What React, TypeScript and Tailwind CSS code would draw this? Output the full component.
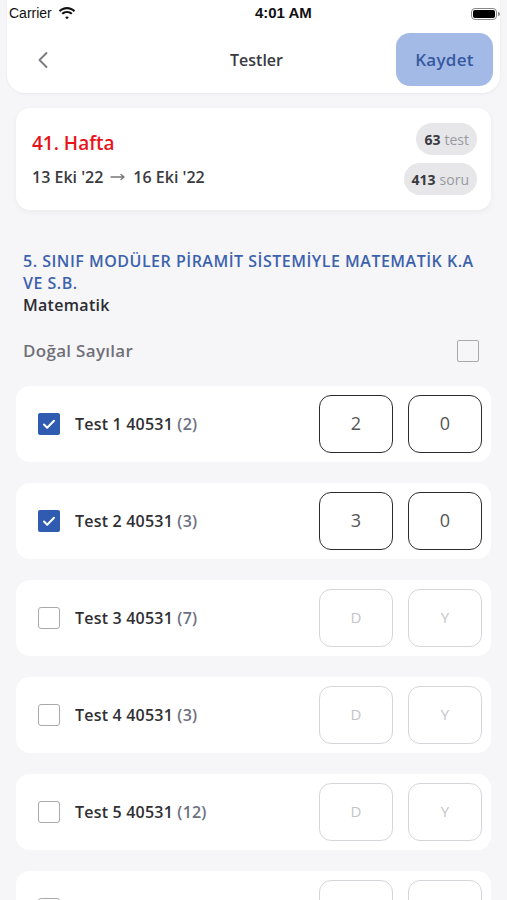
import { ChevronLeft } from "lucide-react";

const font = { fontFamily: "'Open Sans', 'Noto Sans', sans-serif" };

type Row = { name: string; count: number; d?: string; y?: string; checked: boolean };

const rows: Row[] = [
  { name: "Test 1 40531", count: 2, d: "2", y: "0", checked: true },
  { name: "Test 2 40531", count: 3, d: "3", y: "0", checked: true },
  { name: "Test 3 40531", count: 7, checked: false },
  { name: "Test 4  40531", count: 3, checked: false },
  { name: "Test 5 40531", count: 12, checked: false },
  { name: "Test 6 40531", count: 4, checked: false },
];

function WifiIcon() {
  return (
    <svg width="18" height="13" viewBox="0 0 18 13" aria-hidden>
      <path d="M9 2.2c2.6 0 5 1 6.8 2.7l1.4-1.5C15 1.3 12.1 0 9 0S3 1.3.8 3.4l1.4 1.5C4 3.2 6.4 2.2 9 2.2z" fill="#111" />
      <path d="M9 6c1.6 0 3 .6 4.1 1.6l1.4-1.5C13.1 4.8 11.1 4 9 4s-4.1.8-5.5 2.1l1.4 1.5C6 6.6 7.4 6 9 6z" fill="#111" />
      <path d="M9 9.6c.7 0 1.3.3 1.8.7L9 12.3 7.2 10.3c.5-.4 1.1-.7 1.8-.7z" fill="#111" />
    </svg>
  );
}

function Battery() {
  return (
    <div className="flex items-center">
      <div className="flex h-[12px] w-[26px] items-center rounded-[4px] border border-[#888] p-[1px]">
        <div className="h-full w-full rounded-[2px] bg-black" />
      </div>
      <div className="ml-[1px] h-[4px] w-[2px] rounded-r-sm bg-[#888]" />
    </div>
  );
}

function LongArrow() {
  return (
    <svg width="16" height="8" viewBox="0 0 16 8" fill="none" aria-hidden className="mx-[7px]">
      <path d="M1 4h13M11 1.5L14 4l-3 2.5" stroke="#777" strokeWidth="1.3" strokeLinecap="round" strokeLinejoin="round" />
    </svg>
  );
}

function CheckBox({ checked }: { checked: boolean }) {
  if (checked) {
    return (
      <div className="flex h-[22px] w-[22px] shrink-0 items-center justify-center rounded-[2px] bg-[#2f5cb0]">
        <svg width="16" height="16" viewBox="0 0 16 16" fill="none" aria-hidden>
          <path d="M3 8.5l3.2 3.2L13 4.8" stroke="white" strokeWidth="2" strokeLinecap="round" strokeLinejoin="round" />
        </svg>
      </div>
    );
  }
  return <div className="h-[22px] w-[22px] shrink-0 rounded-[3px] border-[1.5px] border-[#a9a9ad] bg-white" />;
}

function ScoreBox({ value, placeholder, active }: { value?: string; placeholder: string; active: boolean }) {
  return (
    <div
      className={
        active
          ? "flex h-[58px] w-[74px] items-center justify-center rounded-[12px] border-[1.5px] border-[#2b2b2f] text-[18px] text-[#555]"
          : "flex h-[58px] w-[74px] items-center justify-center rounded-[12px] border-[1.5px] border-[#d6d6da] text-[15px] text-[#c4c4c8]"
      }
    >
      {value ?? placeholder}
    </div>
  );
}

export default function App() {
  return (
    <div className="h-[900px] overflow-hidden bg-[#f6f6f8] text-[#2b2b30]" style={font}>
      <div className="mx-[7px] rounded-b-[18px] bg-white shadow-[0_1px_3px_rgba(0,0,0,0.06)]">
        <div className="flex h-[27px] items-center justify-between pl-[2px]">
          <div className="flex items-center gap-[6px] text-[14px] text-[#111]" style={{ fontFamily: "'Liberation Sans', sans-serif" }}>
            <span>Carrier</span>
            <WifiIcon />
          </div>
          <span className="pl-[20px] text-[15px] font-bold text-[#111]" style={{ fontFamily: "'Liberation Sans', sans-serif" }}>
            4:01 AM
          </span>
          <Battery />
        </div>
        <div className="flex items-center justify-between pb-[7px] pl-[22px] pr-[7px] pt-[6px]">
          <ChevronLeft size={28} strokeWidth={1.6} className="text-[#7a7a80]" />
          <span className="pl-[60px] text-[16px] font-semibold text-[#3a3a3f]">Testler</span>
          <div className="flex h-[53px] w-[97px] items-center justify-center rounded-[14px] bg-[#a3bae6] text-[17px] font-semibold tracking-[0.3px] text-[#37599f]">
            Kaydet
          </div>
        </div>
      </div>

      <div className="mx-[16px] mt-[15px] flex items-center justify-between rounded-[14px] bg-white py-[15px] pl-[16px] pr-[14px] shadow-[0_2px_6px_rgba(0,0,0,0.05)]">
        <div className="flex flex-col gap-[7px]">
          <span className="text-[19px] font-semibold text-[#e8141c]">41. Hafta</span>
          <span className="flex items-center text-[16px] font-semibold text-[#3a3a3f]">
            13 Eki '22
            <LongArrow />
            16 Eki '22
          </span>
        </div>
        <div className="flex flex-col items-end gap-[8px]">
          <div className="flex h-[32px] items-center gap-[4px] rounded-full bg-[#e7e7ea] px-[8px] text-[14px]">
            <span className="font-bold text-[#3a3a3f]">63</span>
            <span className="text-[#9a9aa0]">test</span>
          </div>
          <div className="flex h-[32px] items-center gap-[4px] rounded-full bg-[#e7e7ea] px-[8px] text-[14px]">
            <span className="font-bold text-[#3a3a3f]">413</span>
            <span className="text-[#9a9aa0]">soru</span>
          </div>
        </div>
      </div>

      <div className="px-[23px] pt-[40px]">
        <div className="text-[16px] font-semibold leading-[22px] tracking-[0.5px] text-[#3d62ad]">
          5. SINIF MODÜLER PİRAMİT SİSTEMİYLE MATEMATİK K.A
          <br />
          VE S.B.
        </div>
        <div className="text-[16px] font-semibold leading-[22px] tracking-[0.3px] text-[#2b2b30]">Matematik</div>
        <div className="mt-[22px] flex items-center justify-between pr-[5px]">
          <span className="text-[17px] font-semibold tracking-[0.3px] text-[#707078]">Doğal Sayılar</span>
          <div className="h-[22px] w-[22px] rounded-[2px] border-[1.5px] border-[#a9a9ad]" />
        </div>
      </div>

      <div className="mx-[16px] mt-[22px] flex flex-col gap-[21px]">
        {rows.map((r) => (
          <div key={r.name} className="flex h-[76px] shrink-0 items-center justify-between rounded-[14px] bg-white pl-[22px] pr-[9px]">
            <div className="flex items-center gap-[15px]">
              <CheckBox checked={r.checked} />
              <span className="text-[16px] font-semibold tracking-[0.2px] text-[#2f2f34]">
                {r.name} <span className="font-semibold text-[#6e7082]">({r.count})</span>
              </span>
            </div>
            <div className="flex gap-[15px]">
              <ScoreBox value={r.d} placeholder="D" active={r.checked} />
              <ScoreBox value={r.y} placeholder="Y" active={r.checked} />
            </div>
          </div>
        ))}
      </div>
    </div>
  );
}
